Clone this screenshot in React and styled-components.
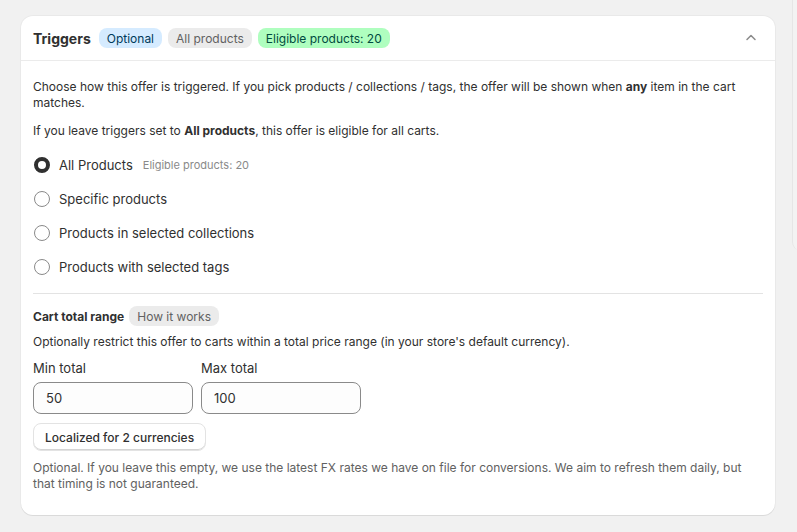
import React, { useState } from 'react'
import styled, { createGlobalStyle } from 'styled-components'

const GlobalStyle = createGlobalStyle`
    html, body {
        margin: 0;
        padding: 0;
        background: #f1f1f1;
        font-family: Inter, "Noto Sans", sans-serif;
        color: #303030;
        -webkit-font-smoothing: antialiased;
    }
`
const Page = styled.div`
    display: flex;
    align-items: flex-start;
    gap: 17px;
    padding: 16px 0 0 21px;
    width: 797px;
    height: 532px;
    box-sizing: border-box;
    overflow: hidden;
`
const Card = styled.section`
    width: 754px;
    flex-shrink: 0;
    background: #fff;
    border-radius: 12px;
    box-shadow: 0 1px 0 0 rgba(26, 26, 26, 0.07), 0 0 0 1px rgba(0, 0, 0, 0.03);
    overflow: hidden;
`
const SidePanel = styled.div`
    flex-shrink: 0;
    width: 60px;
    height: 250px;
    margin-top: -16px;
    background: #f3f3f3;
    border-left: 1px solid #e6e6e6;
    border-bottom-left-radius: 8px;
`
const Header = styled.div`
    display: flex;
    align-items: center;
    gap: 6px;
    height: 44px;
    padding: 0 12px;
    border-bottom: 1px solid #ebebeb;
`
const Title = styled.h2`
    margin: 0 2px 0 0;
    font-size: 14px;
    font-weight: 650;
    color: #303030;
`
const Badge = styled.span`
    display: inline-flex;
    align-items: center;
    height: 20px;
    padding: 0 8px;
    border-radius: 8px;
    font-size: 12px;
    font-weight: 400;
    background: ${p => p.$bg};
    color: ${p => p.$color};
`
const Collapse = styled.button`
    margin-left: auto;
    width: 24px;
    height: 24px;
    display: flex;
    align-items: center;
    justify-content: center;
    border: 0;
    background: none;
    padding: 0;
    color: #8a8a8a;
`
const Body = styled.div`
    padding: 18px 12px 23px;
`
const Text = styled.p`
    margin: 0 0 ${p => p.$mb || 0}px;
    font-size: 12px;
    line-height: 16px;
    color: ${p => p.$muted ? '#616161' : '#303030'};
    b { font-weight: 650; }
`
const RadioList = styled.div`
    display: flex;
    flex-direction: column;
    gap: 14px;
    margin-top: 16px;
`
const RadioRow = styled.label`
    display: flex;
    align-items: center;
    gap: 9px;
    height: 20px;
    font-size: 13px;
    color: #303030;
    cursor: pointer;
`
const RadioDot = styled.span`
    width: 16px;
    height: 16px;
    margin-left: 1px;
    border-radius: 50%;
    box-sizing: border-box;
    border: ${p => p.$checked ? '4.5px solid #303030' : '1px solid #8a8a8a'};
    background: #fff;
`
const Hint = styled.span`
    margin-left: 1px;
    font-size: 11px;
    color: #8a8a8a;
`
const Divider = styled.hr`
    margin: 16px 0 12px;
    border: 0;
    border-top: 1px solid #e3e3e3;
`
const SubHeader = styled.div`
    display: flex;
    align-items: center;
    gap: 5px;
    margin-bottom: 8px;
`
const SubTitle = styled.h3`
    margin: 0;
    font-size: 12px;
    font-weight: 650;
`
const Fields = styled.div`
    display: flex;
    gap: 8px;
    margin: 10px 0 9px;
`
const Field = styled.div`
    display: flex;
    flex-direction: column;
    gap: 6px;
    width: 160px;
`
const FieldLabel = styled.label`
    font-size: 13px;
    line-height: 16px;
`
const Input = styled.input`
    height: 32px;
    box-sizing: border-box;
    padding: 0 12px;
    border: 1px solid #8a8a8a;
    border-radius: 8px;
    font-family: inherit;
    font-size: 13px;
    color: #303030;
    background: #fdfdfd;
    outline: none;
`
const Button = styled.button`
    height: 28px;
    padding: 0 11px;
    border-radius: 8px;
    border: 1px solid #e3e3e3;
    background: #fff;
    box-shadow: inset 0 -1px 0 #d4d4d4;
    font-family: inherit;
    font-size: 12px;
    font-weight: 550;
    color: #303030;
    margin-bottom: 9px;
`

const options = [
    { id: 'all', label: 'All Products', hint: 'Eligible products: 20' },
    { id: 'specific', label: 'Specific products' },
    { id: 'collections', label: 'Products in selected collections' },
    { id: 'tags', label: 'Products with selected tags' },
]

function ChevronUp() {
    return (
        <svg width="12" height="12" viewBox="0 0 12 12" fill="none">
            <path d="M2 7.5 6 3.5l4 4" stroke="currentColor" strokeWidth="1.5" strokeLinecap="round" strokeLinejoin="round" />
        </svg>
    )
}

export default function App() {
    const [selected, setSelected] = useState('all')
    const [min, setMin] = useState('50')
    const [max, setMax] = useState('100')

    return (
        <>
            <GlobalStyle />
            <Page>
                <Card>
                    <Header>
                        <Title>Triggers</Title>
                        <Badge $bg="#d5ebff" $color="#003a5a">Optional</Badge>
                        <Badge $bg="#ebebeb" $color="#616161">All products</Badge>
                        <Badge $bg="#affebf" $color="#014b40">Eligible products: 20</Badge>
                        <Collapse aria-label="Collapse"><ChevronUp /></Collapse>
                    </Header>
                    <Body>
                        <Text $mb={12}>
                            Choose how this offer is triggered. If you pick products / collections / tags, the offer will be shown when <b>any</b> item in the cart matches.
                        </Text>
                        <Text>
                            If you leave triggers set to <b>All products</b>, this offer is eligible for all carts.
                        </Text>
                        <RadioList>
                            {options.map(o => (
                                <RadioRow key={o.id} onClick={() => setSelected(o.id)}>
                                    <RadioDot $checked={selected === o.id} />
                                    {o.label}
                                    {o.hint && <Hint>{o.hint}</Hint>}
                                </RadioRow>
                            ))}
                        </RadioList>
                        <Divider />
                        <SubHeader>
                            <SubTitle>Cart total range</SubTitle>
                            <Badge $bg="#ebebeb" $color="#616161">How it works</Badge>
                        </SubHeader>
                        <Text>
                            Optionally restrict this offer to carts within a total price range (in your store's default currency).
                        </Text>
                        <Fields>
                            <Field>
                                <FieldLabel>Min total</FieldLabel>
                                <Input value={min} onChange={e => setMin(e.target.value)} />
                            </Field>
                            <Field>
                                <FieldLabel>Max total</FieldLabel>
                                <Input value={max} onChange={e => setMax(e.target.value)} />
                            </Field>
                        </Fields>
                        <Button>Localized for 2 currencies</Button>
                        <Text $muted>
                            Optional. If you leave this empty, we use the latest FX rates we have on file for conversions. We aim to refresh them daily, but that timing is not guaranteed.
                        </Text>
                    </Body>
                </Card>
                <SidePanel />
            </Page>
        </>
    )
}
